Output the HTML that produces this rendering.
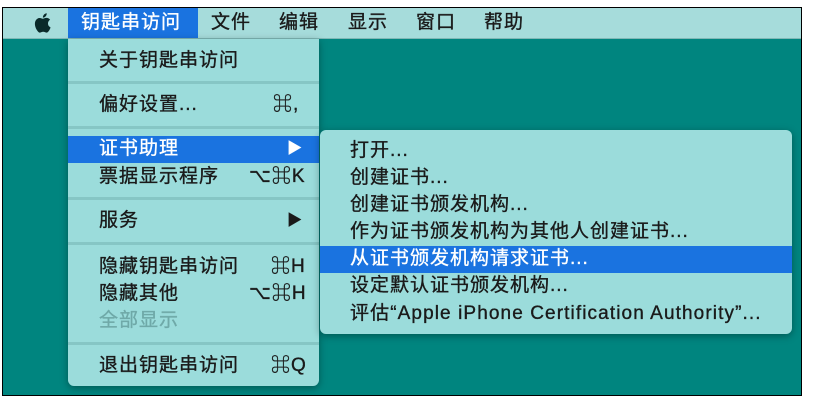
<!DOCTYPE html>
<html><head><meta charset="utf-8"><style>
body{margin:0;width:814px;height:408px;background:#fff;position:relative;overflow:hidden;font-family:"Liberation Sans","Noto Sans CJK SC",sans-serif;}
.frame{position:absolute;left:2px;top:7px;width:798px;height:387px;border:1px solid #000;background:#00857f;overflow:hidden}
.bar{position:absolute;left:0;top:0;width:100%;height:30px;background:#a6dcdb;border-bottom:1px solid #7fb8b6}
.t{position:absolute;font-size:19px;letter-spacing:1px;color:#1a1a1a;white-space:nowrap;line-height:22px;-webkit-text-stroke:0.35px currentColor}
.menu{position:absolute;background:#9bdcdb;border-radius:0 0 6px 6px;box-shadow:0 2px 8px rgba(0,0,0,.35)}
.sep{position:absolute;left:0;right:0;height:3px;background:#86c6c5}
.hl{position:absolute;background:#1a73e0}
.w{color:#fff}
.g{color:#6fa9a8}
</style></head><body>
<div class="frame">
<div class="bar"></div>
<div class="hl" style="left:65px;top:0;width:130px;height:30px"></div>
<svg style="position:absolute;left:31px;top:4px" width="20" height="22" viewBox="0 0 20 22"><path d="M14 11.5c0-2.5 2-3.6 2.1-3.7-1.2-1.7-3-1.9-3.6-1.9-1.5-.2-3 .9-3.7.9-.8 0-2-.9-3.2-.8C4 6 2.5 7 1.7 8.5 0 11.4 1.3 15.8 3 18.2c.8 1.2 1.8 2.5 3 2.4 1.2 0 1.7-.8 3.2-.8s1.9.8 3.2.8c1.3 0 2.1-1.2 2.9-2.4.9-1.4 1.3-2.7 1.3-2.8 0 0-2.6-1-2.6-3.9zM11.7 4.2c.7-.8 1.1-1.9 1-3-1 0-2.1.7-2.8 1.5-.6.7-1.2 1.8-1 2.9 1.1.1 2.1-.6 2.8-1.4z" fill="#0a2a2a"/></svg>
<div class="t w" style="left:78px;top:4px">钥匙串访问</div>
<div class="t" style="left:208px;top:4px">文件</div>
<div class="t" style="left:276px;top:4px">编辑</div>
<div class="t" style="left:345px;top:4px">显示</div>
<div class="t" style="left:413px;top:4px">窗口</div>
<div class="t" style="left:481px;top:4px">帮助</div>

<div class="menu" style="left:65px;top:31px;width:251px;height:347px"></div>
<div class="sep" style="left:65px;width:251px;top:73px"></div>
<div class="sep" style="left:65px;width:251px;top:118px"></div>
<div class="sep" style="left:65px;width:251px;top:189px"></div>
<div class="sep" style="left:65px;width:251px;top:234px"></div>
<div class="sep" style="left:65px;width:251px;top:334px"></div>
<div class="hl" style="left:65px;top:128px;width:251px;height:27px"></div>
<div class="t" style="left:96px;top:42px">关于钥匙串访问</div>
<div class="t" style="left:96px;top:86px">偏好设置...</div><div class="t" style="left:270px;top:86px">⌘,</div>
<div class="t w" style="left:96px;top:130px">证书助理</div><div class="t w" style="left:284px;top:130px;font-size:15px">▶</div>
<div class="t" style="left:96px;top:158px">票据显示程序</div><div class="t" style="left:246px;top:158px">⌥⌘K</div>
<div class="t" style="left:96px;top:202px">服务</div><div class="t" style="left:284px;top:202px;font-size:15px">▶</div>
<div class="t" style="left:96px;top:248px">隐藏钥匙串访问</div><div class="t" style="left:268px;top:248px">⌘H</div>
<div class="t" style="left:96px;top:275px">隐藏其他</div><div class="t" style="left:246px;top:275px">⌥⌘H</div>
<div class="t g" style="left:96px;top:302px">全部显示</div>
<div class="t" style="left:96px;top:347px">退出钥匙串访问</div><div class="t" style="left:268px;top:347px">⌘Q</div>

<div class="menu" style="left:317px;top:122px;width:472px;height:204px;border-radius:6px"></div>
<div class="hl" style="left:317px;top:238px;width:472px;height:27px"></div>
<div class="t" style="left:347px;top:132px">打开...</div>
<div class="t" style="left:347px;top:159px">创建证书...</div>
<div class="t" style="left:347px;top:186px">创建证书颁发机构...</div>
<div class="t" style="left:347px;top:213px">作为证书颁发机构为其他人创建证书...</div>
<div class="t w" style="left:347px;top:240px">从证书颁发机构请求证书...</div>
<div class="t" style="left:347px;top:267px">设定默认证书颁发机构...</div>
<div class="t" style="left:347px;top:295px;letter-spacing:1.1px">评估“Apple iPhone Certification Authority”...</div>
</div>
</body></html>
